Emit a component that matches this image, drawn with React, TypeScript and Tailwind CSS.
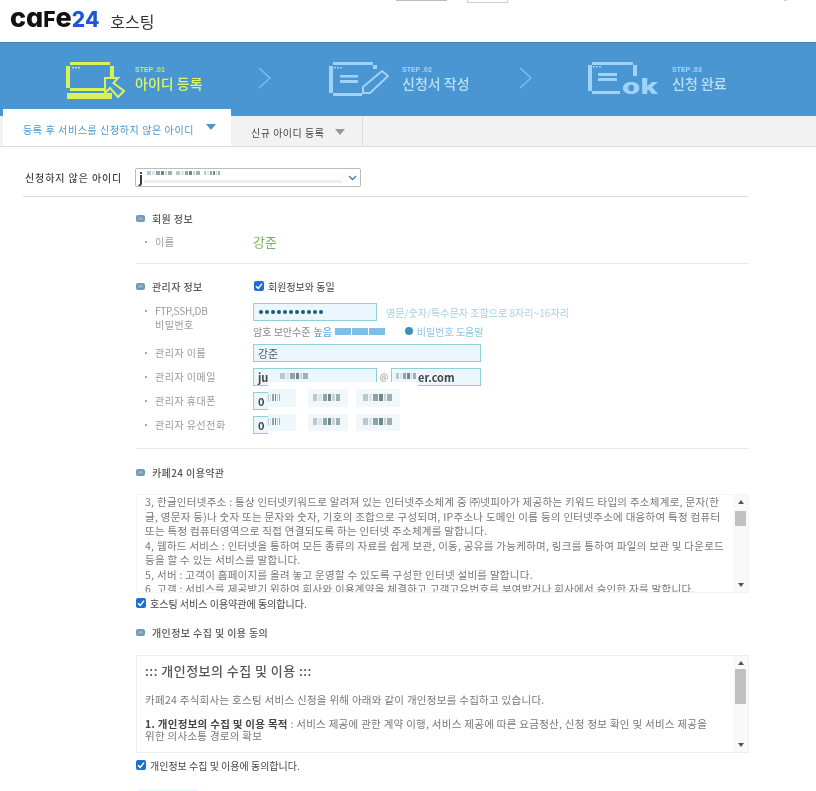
const font = { fontFamily: '"Noto Sans CJK KR", "Noto Sans", sans-serif' };

function Bullet() {
  return <span className="inline-block w-[9px] h-[7px] rounded-[2px] bg-[#8fb0c4] border-[2px] border-[#6f9bb5] shrink-0" />;
}

function Heading({ children }: { children: React.ReactNode }) {
  return (
    <div className="flex items-center gap-[7px] w-[118px] shrink-0 text-[10px] font-medium tracking-[0.4px] text-[#555] whitespace-nowrap">
      <Bullet />
      <span>{children}</span>
    </div>
  );
}

function Label({ children }: { children: React.ReactNode }) {
  return (
    <div className="flex items-start w-[117px] shrink-0 pl-[9px] text-[10px] leading-[14px] tracking-[0.5px] text-[#999] whitespace-nowrap">
      <span className="w-[2px] h-[2px] bg-[#9ab] mt-[6px] mr-[8px]" />
      <span>{children}</span>
    </div>
  );
}

function Field({ className, children }: { className: string; children?: React.ReactNode }) {
  return (
    <div className={`h-[18px] bg-[#ebf7fc] border border-[#8fd0d8] flex items-center pl-[4px] text-[11px] text-[#555] overflow-hidden ${className}`}>
      {children}
    </div>
  );
}

function Check({ label }: { label: string }) {
  return (
    <div className="flex items-center gap-[4px]">
      <span className="w-[10px] h-[10px] rounded-[2px] bg-[#1f6fd0] flex items-center justify-center">
        <svg width="8" height="8" viewBox="0 0 8 8">
          <path d="M1 4.2 L3.2 6.4 L7 1.6" fill="none" stroke="#fff" strokeWidth="1.5" />
        </svg>
      </span>
      <span className="text-[10px] text-[#444] whitespace-nowrap">{label}</span>
    </div>
  );
}

function Chevron() {
  return (
    <svg width="13" height="22" viewBox="0 0 13 22" className="shrink-0">
      <path d="M1 1 L12 11 L1 21" fill="none" stroke="#86c0ee" strokeWidth="1.2" />
    </svg>
  );
}

function Step({ num, title, active, className }: { num: string; title: string; active?: boolean; className: string }) {
  return (
    <div className={`shrink-0 mt-[3px] ${className}`}>
      <div className={`text-[7px] leading-[8px] font-bold ${active ? 'text-[#c5ec6a]' : 'text-[#a5d5f7]'}`} style={{ fontFamily: '"Liberation Sans", sans-serif' }}>
        STEP .{num}
      </div>
      <div className={`text-[14px] leading-[18px] font-medium whitespace-nowrap ${active ? 'text-[#dcf56b]' : 'text-[#b9e0fb]'}`}>{title}</div>
    </div>
  );
}

function Scrollbar({ thumbTop, thumbHeight }: { thumbTop: string; thumbHeight: string }) {
  return (
    <div className="w-[15px] shrink-0 bg-[#f9f9f9] flex flex-col items-center relative">
      <span className="absolute top-[5px] w-0 h-0 border-x-[3px] border-x-transparent border-b-[4px] border-b-[#555]" />
      <span className={`absolute left-[2px] w-[11px] bg-[#c1c1c1] ${thumbTop} ${thumbHeight}`} />
      <span className="absolute bottom-[5px] w-0 h-0 border-x-[3px] border-x-transparent border-t-[4px] border-t-[#555]" />
    </div>
  );
}

// pixelated patch standing in for the masked characters
function Mosaic({ className }: { className: string }) {
  return (
    <div className={`absolute flex gap-[1px] h-[7px] ${className}`}>
      <span className="flex-[4] bg-[#b9c8cc]" />
      <span className="flex-[3] bg-[#dfe6e8]" />
      <span className="flex-[4] bg-[#8ea4ac]" />
      <span className="flex-[3] bg-[#6d8791]" />
      <span className="flex-[2] bg-[#c8d4d8]" />
      <span className="flex-[4] bg-[#9db0b7]" />
    </div>
  );
}

function PhoneMask({ top, height }: { top: string; height: string }) {
  return (
    <>
      <div className={`absolute left-[132px] w-[28px] bg-[#eef8fb] ${top} ${height}`} />
      <div className={`absolute left-[172px] w-[40px] bg-[#f2f8fa] ${top} ${height}`} />
      <div className={`absolute left-[220px] w-[44px] bg-[#f2f8fa] ${top} ${height}`} />
      <Mosaic className="left-[132px] top-[2px] w-[12px]" />
      <Mosaic className="left-[177px] top-[2px] w-[27px]" />
      <Mosaic className="left-[227px] top-[2px] w-[29px]" />
    </>
  );
}

const terms = [
  '3, 한글인터넷주소 : 통상 인터넷키워드로 알려져 있는 인터넷주소체계 중 ㈜넷피아가 제공하는 키워드 타입의 주소체계로, 문자(한',
  '글, 영문자 등)나 숫자 또는 문자와 숫자, 기호의 조합으로 구성되며, IP주소나 도메인 이름 등의 인터넷주소에 대응하여 특정 컴퓨터',
  '또는 특정 컴퓨터영역으로 직접 연결되도록 하는 인터넷 주소체계를 말합니다.',
  '4, 웹하드 서비스 : 인터넷을 통하여 모든 종류의 자료를 쉽게 보관, 이동, 공유를 가능케하며, 링크를 통하여 파일의 보관 및 다운로드',
  '등을 할 수 있는 서비스를 말합니다.',
  '5, 서버 : 고객이 홈페이지를 올려 놓고 운영할 수 있도록 구성한 인터넷 설비를 말합니다.',
  '6, 고객 : 서비스를 제공받기 위하여 회사와 이용계약을 체결하고 고객고유번호를 부여받거나 회사에서 승인한 자를 말합니다.',
];

export default function App() {
  return (
    <div className="relative w-[816px] h-[791px] overflow-hidden bg-white blur-[0.5px]" style={font}>
      {/* Top edge leftovers */}
      <div className="absolute top-0 left-[396px] w-[51px] h-[1px] bg-[#bbb]" />
      <div className="absolute top-[-1px] left-[467px] w-[41px] h-[4px] border border-[#ccc]" />
      <div className="absolute top-0 left-[784px] w-[3px] h-[1px] bg-[#ccc]" />

      {/* Header */}
      <div className="h-[42px] flex items-start pl-[10px]">
        <div className="h-[36px] flex items-baseline text-[27px] leading-[36px] font-extrabold text-[#111]" style={{ fontFamily: 'Inter, sans-serif' }}>
          <span>c</span>
          <span>ɑ</span>
          <span className="text-[21px]">F</span>
          <span>e</span>
          <span className="text-[21px] text-[#1f56d8]">24</span>
        </div>
        <div className="ml-[11px] mt-[9px] text-[16px] leading-[24px] text-[#333]">호스팅</div>
      </div>

      {/* Steps band */}
      <div className="h-[74px] bg-[#4a96d2] border-t border-[#3f7fb3] flex items-center pl-[65px] pb-[4px]">
        <svg width="60" height="38" viewBox="0 0 60 38" className="shrink-0 mt-[7px]">
          <g fill="#d8f25a">
            <rect x="5" y="0" width="40" height="3" />
            <rect x="1" y="4" width="4" height="22" />
            <rect x="5" y="26" width="34" height="3" />
            <rect x="45" y="4" width="4" height="11" />
            <rect x="2" y="31" width="45" height="6" />
            <rect x="7" y="5" width="2" height="1.4" />
            <rect x="10" y="5" width="2" height="1.4" />
            <rect x="13" y="5" width="2" height="1.4" />
          </g>
          <path d="M40 16 H53 L48.5 21 L59 29 L53 35 L45 26 L40 31 Z" fill="#4a96d2" stroke="#d8f25a" strokeWidth="2" />
        </svg>
        <Step num="01" title="아이디 등록" active className="ml-[10px] w-[123px]" />
        <Chevron />
        <svg width="60" height="38" viewBox="0 0 60 38" className="shrink-0 ml-[58px] mt-[7px]">
          <g fill="#9fd3fb">
            <rect x="4" y="0" width="40" height="3" />
            <rect x="0" y="4" width="4" height="27" />
            <rect x="4" y="31" width="29" height="3" />
            <rect x="44" y="3" width="4" height="4" />
            <rect x="11" y="13" width="18" height="2.5" />
            <rect x="11" y="18" width="18" height="3" />
            <rect x="5" y="5" width="2" height="1.4" />
            <rect x="8" y="5" width="2" height="1.4" />
            <rect x="11" y="5" width="2" height="1.4" />
          </g>
          <path d="M34 25 L53 9 L59 14 L41 31 L34 31 Z" fill="#4a96d2" stroke="#9fd3fb" strokeWidth="2" />
        </svg>
        <Step num="02" title="신청서 작성" className="ml-[13px] w-[117px]" />
        <Chevron />
        <svg width="72" height="38" viewBox="0 0 72 38" className="shrink-0 ml-[56px] mt-[7px]">
          <g fill="#9fd3fb">
            <rect x="4" y="0" width="41" height="3" />
            <rect x="0" y="3" width="4" height="26" />
            <rect x="4" y="29" width="28" height="3" />
            <rect x="45" y="3" width="4" height="11" />
            <rect x="10" y="11" width="19" height="3" />
            <rect x="10" y="16" width="19" height="3" />
            <rect x="5" y="4" width="2" height="1.4" />
            <rect x="8" y="4" width="2" height="1.4" />
            <rect x="11" y="4" width="2" height="1.4" />
            <text x="34" y="32" fontFamily="Inter, sans-serif" fontWeight="800" fontSize="21" textLength="36" lengthAdjust="spacingAndGlyphs">ok</text>
          </g>
        </svg>
        <Step num="03" title="신청 완료" className="ml-[12px]" />
      </div>

      {/* Tabs */}
      <div className="h-[31px] bg-[#f2f2f2] border-b border-[#ddd] flex items-end">
        <div className="relative ml-[3px] w-[228px] h-[37px] bg-white flex items-center pl-[20px] pt-[3px] text-[10px] tracking-[0.6px] text-[#4a96d2] whitespace-nowrap">
          등록 후 서비스를 신청하지 않은 아이디
          <span className="ml-[12px] mb-[4px] w-0 h-0 border-x-[5px] border-x-transparent border-t-[6px] border-t-[#4a96d2]" />
        </div>
        <div className="w-[132px] h-full border-r border-[#ddd] flex items-center pl-[20px] pt-[3px] text-[10px] tracking-[0.5px] text-[#444] whitespace-nowrap">
          신규 아이디 등록
          <span className="ml-[11px] mb-[2px] w-0 h-0 border-x-[5px] border-x-transparent border-t-[6px] border-t-[#999]" />
        </div>
      </div>

      {/* Unregistered id select */}
      <div className="ml-[23px] w-[726px] pt-[21px] pb-[9px] border-b border-[#ddd] flex items-center">
        <div className="w-[112px] pl-[2px] text-[10px] font-medium tracking-[0.9px] text-[#444] whitespace-nowrap">신청하지 않은 아이디</div>
        <div className="relative w-[226px] h-[19px] border border-[#bbb] rounded-[2px] flex items-center pl-[3px] text-[13px] font-bold text-[#333]">
          j
          <div className="absolute left-[8px] top-[1px] w-[200px] h-[15px] bg-white" />
          <div className="absolute left-[8px] top-[11px] w-[198px] h-[3px] bg-[#eee]" />
          <Mosaic className="left-[11px] top-[2px] w-[25px] !h-[4px]" />
          <Mosaic className="left-[40px] top-[2px] w-[24px] !h-[4px]" />
          <Mosaic className="left-[68px] top-[2px] w-[16px] !h-[4px]" />
          <svg width="9" height="6" viewBox="0 0 9 6" className="absolute right-[3px] top-[6px]">
            <path d="M1 1 L4.5 4.5 L8 1" fill="none" stroke="#3f7fb3" strokeWidth="1.4" />
          </svg>
        </div>
      </div>

      <div className="ml-[136px] w-[613px]">
        {/* Member info */}
        <div className="h-[16px] mt-[13px] flex items-center"><Heading>회원 정보</Heading></div>
        <div className="h-[20px] mt-[6px] flex items-center">
          <Label>이름</Label>
          <span className="text-[13px] text-[#7aae62]">강준</span>
        </div>
        <div className="h-[1px] mt-[11px] bg-[#e8e8e8]" />

        {/* Admin info */}
        <div className="h-[16px] mt-[14px] flex items-center">
          <Heading>관리자 정보</Heading>
          <Check label="회원정보와 동일" />
        </div>
        <div className="flex mt-[9px] h-[18px] items-center">
          <div className="self-start pt-[1px]">
            <Label>
              <span className="tracking-[-0.2px]">FTP,SSH,DB</span>
              <br />
              비밀번호
            </Label>
          </div>
          <Field className="w-[124px] !pl-[5px] gap-[2px]">
            {Array.from({ length: 11 }).map((_, i) => (
              <span key={i} className="w-[4px] h-[4px] rounded-full bg-[#1d5c78] shrink-0" />
            ))}
          </Field>
          <span className="ml-[9px] text-[10px] tracking-[0.05px] text-[#a9cfe4] whitespace-nowrap">영문/숫자/특수문자 조합으로 8자리~16자리</span>
        </div>
        <div className="flex mt-[3px] h-[14px] items-center pl-[117px] text-[10px] whitespace-nowrap">
          <span className="text-[#888]">암호 보안수준</span>
          <span className="ml-[3px] text-[#5fa8d8] font-medium">높음</span>
          <span className="ml-[3px] w-[16px] h-[7px] bg-[#7cc0ea]" />
          <span className="ml-[1px] w-[16px] h-[7px] bg-[#7cc0ea]" />
          <span className="ml-[1px] w-[16px] h-[7px] bg-[#7cc0ea]" />
          <span className="ml-[20px] w-[8px] h-[8px] rounded-full bg-[#3f8fb8]" />
          <span className="ml-[4px] text-[#8ec4e6]">비밀번호 도움말</span>
        </div>
        <div className="flex mt-[6px] h-[18px] items-center">
          <Label>관리자 이름</Label>
          <Field className="w-[228px]">강준</Field>
        </div>
        <div className="relative flex mt-[6px] h-[18px] items-center">
          <Label>관리자 이메일</Label>
          <Field className="w-[124px] font-bold !text-[#444]">ju</Field>
          <span className="w-[14px] text-center text-[9px] text-[#888]">@</span>
          <Field className="w-[90px] !pl-[26px] font-bold !text-[#444]">er.com</Field>
          <Mosaic className="left-[144px] top-[5px] w-[28px] !h-[6px]" />
          <Mosaic className="left-[260px] top-[5px] w-[20px] !h-[6px]" />
        </div>
        <div className="relative flex mt-[6px] h-[18px] items-center">
          <Label>관리자 휴대폰</Label>
          <Field className="w-[40px] font-bold !text-[#444]">0</Field>
          <div className="absolute left-[132px] top-[-10px] w-[150px] h-[41px] bg-white" />
          <PhoneMask top="top-[-3px]" height="h-[18px]" />
        </div>
        <div className="relative flex mt-[6px] h-[18px] items-center">
          <Label>관리자 유선전화</Label>
          <Field className="w-[40px] font-bold !text-[#444]">0</Field>
          <div className="absolute left-[132px] top-[-7px] w-[150px] h-[26px] bg-white" />
          <PhoneMask top="top-[-2px]" height="h-[17px]" />
        </div>
        <div className="h-[1px] mt-[14px] bg-[#e8e8e8]" />

        {/* Terms */}
        <div className="h-[16px] mt-[15px] flex items-center"><Heading>카페24 이용약관</Heading></div>
        <div className="flex h-[99px] mt-[14px] border border-[#f4f4f4]">
          <div className="flex-1 overflow-hidden pl-[8px] text-[10.5px] leading-[14.5px] tracking-[0.28px] text-[#777] whitespace-nowrap">
            {terms.map((line) => (
              <div key={line}>{line}</div>
            ))}
          </div>
          <Scrollbar thumbTop="top-[16px]" thumbHeight="h-[15px]" />
        </div>
        <div className="h-[14px] mt-[3px] flex items-center"><Check label="호스팅 서비스 이용약관에 동의합니다." /></div>

        {/* Privacy */}
        <div className="h-[16px] mt-[14px] flex items-center"><Heading>개인정보 수집 및 이용 동의</Heading></div>
        <div className="flex h-[98px] mt-[15px] border border-[#eee]">
          <div className="flex-1 overflow-hidden pl-[8px] pt-[3px] text-[10.5px] leading-[14px] tracking-[0.28px] text-[#777] whitespace-nowrap">
            <div className="text-[13px] leading-[24px] font-medium tracking-[0.45px] text-[#555]">::: 개인정보의 수집 및 이용 :::</div>
            <div className="mt-[10px]">카페24 주식회사는 호스팅 서비스 신청을 위해 아래와 같이 개인정보를 수집하고 있습니다.</div>
            <div className="mt-[11px] leading-[12px]">
              <span className="font-bold text-[#444]">1. 개인정보의 수집 및 이용 목적</span> : 서비스 제공에 관한 계약 이행, 서비스 제공에 따른 요금정산, 신청 정보 확인 및 서비스 제공을
            </div>
            <div className="leading-[12px]">위한 의사소통 경로의 확보</div>
          </div>
          <Scrollbar thumbTop="top-[13px]" thumbHeight="h-[35px]" />
        </div>
        <div className="h-[14px] mt-[5px] flex items-center"><Check label="개인정보 수집 및 이용에 동의합니다." /></div>
        <div className="h-[2px] w-[60px] ml-[2px] mt-[17px] bg-[#eafcfc]" />
      </div>
    </div>
  );
}
